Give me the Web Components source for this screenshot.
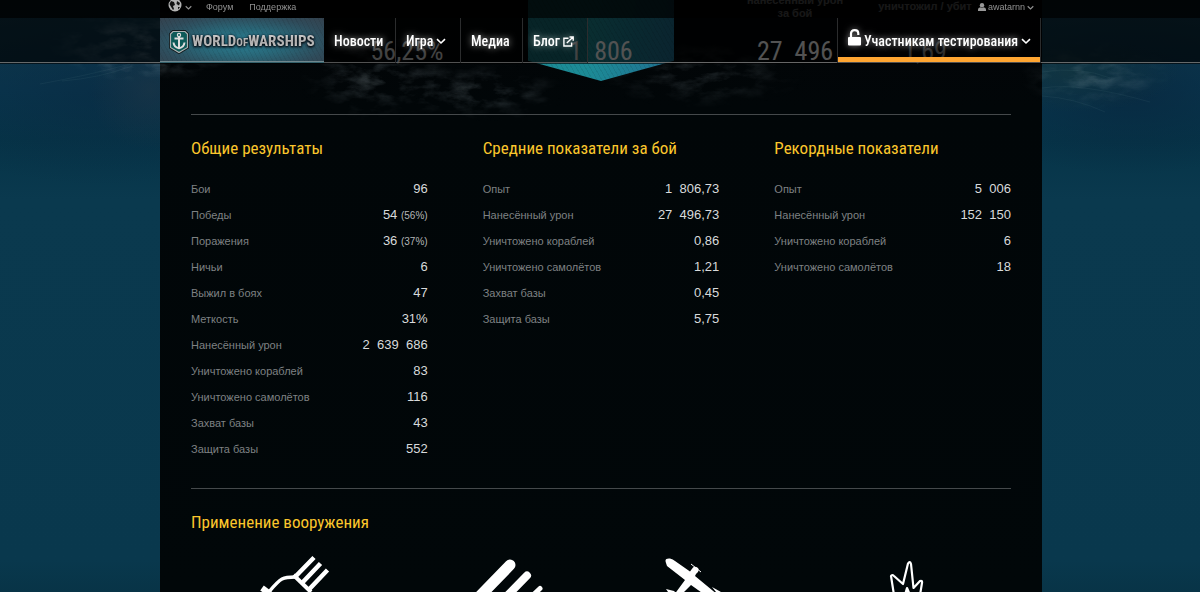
<!DOCTYPE html>
<html lang="ru">
<head>
<meta charset="utf-8">
<title>World of Warships</title>
<style>
  body { margin: 0; background: #08364b; color: #fff; font-family: "Liberation Sans", Arial, sans-serif; }
</style>
</head>
<body>
<profile-page></profile-page>

<script>
const condensed = '"Roboto Condensed", "Liberation Sans Narrow", "Liberation Sans", sans-serif';

function define(name, markup, setup) {
  customElements.define(name, class extends HTMLElement {
    connectedCallback() {
      if (this.shadowRoot) return;
      this.attachShadow({ mode: 'open' }).innerHTML = markup;
      if (setup) setup(this, this.shadowRoot);
    }
  });
}

define('chevron-icon', `
  <style>:host { display: inline-flex; } svg { width: var(--size, 9px); height: var(--size, 9px); }</style>
  <svg viewBox="0 0 10 10" fill="none" stroke="currentColor"><path d="M1 3.2 L5 7 L9 3.2" stroke-width="1.6"/></svg>`);

define('top-bar', `
  <style>
    :host { display: block; height: 18px; background: rgba(0,0,0,.91); }
    .inner { width: 882px; max-width: 100%; margin: 0 auto; padding-left: 2px; }
    nav { display: flex; align-items: center; height: 14px; padding: 0 8px; font-size: 9px; line-height: 14px; }
    a, button { display: flex; align-items: center; color: #929292; text-decoration: none; font: inherit; background: none; border: 0; padding: 0; }
    button { gap: 3px; margin-right: 14px; }
    a + a { margin-left: 16px; }
    .user { margin-left: auto; gap: 2px; }
    chevron-icon { --size: 7px; }
  </style>
  <div class="inner"><nav>
    <button aria-label="Регион">
      <svg width="14" height="14" viewBox="0 0 14 14"><circle cx="7" cy="5" r="6.5" fill="#b4b4b4"/><path d="M3 1 L6 2 L7 5 L5 6 L6 9 L5 10 L2.5 6 L1.5 4Z M9 1 L12 3 L11 5.500 L8.500 4Z M10 7 L12 7 L10 9.500Z" fill="#111"/></svg>
      <chevron-icon></chevron-icon>
    </button>
    <a href="#forum">Форум</a><a href="#support">Поддержка</a>
    <a class="user" href="#account">
      <svg width="8" height="8" viewBox="0 0 8 8" fill="#999"><circle cx="4" cy="2.300" r="2.200"/><path d="M0 8V6.500Q0 4.600 2.400 4.300Q4 5.400 5.600 4.300Q8 4.600 8 6.500V8Z"/></svg>
      awatarnn <chevron-icon></chevron-icon></a>
  </nav></div>`);

define('brand-logo', `
  <style>
    :host { display: block; flex: none; }
    a { display: flex; align-items: center; height: 45px; width: 164px; box-sizing: border-box; padding: 2px 0 0 9px; gap: 3px; text-decoration: none;
      background: repeating-linear-gradient(62deg, rgba(0,0,0,.07) 0 1px, transparent 1px 4px), radial-gradient(ellipse at 50% 55%, #2a8094 0%, #296778 38%, #2f4b5a 75%, #34424e 100%);
      box-shadow: inset 0 -1px #34616c, inset 0 -2px #6f878d; }
    svg { flex: none; }
    .name { font: 800 15px/24px ${condensed}; background: linear-gradient(#cfcfcf 15%, #adadad 50%, #dcdcdc 85%); -webkit-background-clip: text; background-clip: text; color: transparent; filter: drop-shadow(0 1px 1px #000) drop-shadow(0 0 1px #123); white-space: nowrap; }
    small { font-size: 11px; }
  </style>
  <a href="#home" aria-label="World of Warships">
    <svg width="20" height="24" viewBox="0 0 20 24">
      <path d="M4 1.500H16L18.500 4V17.500L10 22.500L1.500 17.500V4Z" fill="#0c4a4c" stroke="#101a1d" stroke-width="3"/>
      <path d="M4 1.500H16L18.500 4V17.500L10 22.500L1.500 17.500V4Z" fill="#0d5a58" stroke="#a9b0b1" stroke-width="1.200"/>
      <g fill="none" stroke="#dedede"><circle cx="10" cy="5" r="1.600" stroke-width="1.200"/><path d="M5.500 8.500H14.500M10 6.500V18" stroke-width="2"/><path d="M4.500 12.500Q5 17.300 10 18.300Q15 17.300 15.500 12.500" stroke-width="2"/></g>
    </svg>
    <span class="name">WORLD<small>OF</small>WARSHIPS</span>
  </a>`);

define('nav-tab', `
  <style>
    :host { display: block; box-sizing: border-box; border-right: 1px solid #2b2c2d; background: rgba(0,0,0,.2); }
    a { display: flex; align-items: center; gap: 3px; box-sizing: border-box; height: 44px; padding: 2px 10px 0; color: #fff; text-decoration: none; white-space: nowrap;
      font: 500 14px/20px ${condensed}; text-shadow: 0 0 7px rgba(255,255,255,.65); }
    :host([active]) { border-left: 1px solid #2b2c2d; }
    :host([active]) a { border-bottom: 5px solid #ffa632; padding-top: 6px; background: rgba(0,0,0,.35); }
    ::slotted(svg) { flex: none; filter: drop-shadow(0 0 3px rgba(255,255,255,.5)); }
  </style>
  <a><slot></slot></a>`, (host, root) => { root.querySelector('a').href = host.getAttribute('href'); });

define('site-header', `
  <style>
    :host { display: block; position: fixed; inset: 0 0 auto; z-index: 2; }
    .bar { height: 44px; background: rgba(0,0,0,.68); border-bottom: 1px solid rgba(128,128,128,.8); box-shadow: 0 1px rgba(0,0,0,.6); }
    .inner { display: flex; width: 882px; max-width: 100%; margin: 0 auto; padding-left: 2px; }
    .news { width: 72px; } .game { width: 65px; } .media { width: 62px; } .blog { width: 65px; }
    .test { margin: 0 1px 0 auto; width: 204px; }
    chevron-icon { --size: 10px; }
    .test svg { margin-bottom: 6px; }
  </style>
  <top-bar></top-bar>
  <div class="bar"><div class="inner">
    <brand-logo></brand-logo>
    <nav-tab class="news" href="#news">Новости</nav-tab>
    <nav-tab class="game" href="#game">Игра <chevron-icon></chevron-icon></nav-tab>
    <nav-tab class="media" href="#media">Медиа</nav-tab>
    <nav-tab class="blog" href="#blog">Блог
      <svg width="11" height="11" viewBox="0 0 11 11" fill="none" stroke="#fff" stroke-width="1.400"><path d="M5.500 2.200H.9V10H8.600V6.500M3.800 7L9.600 1.400M6.500 1H10.200V4.800"/></svg></nav-tab>
    <nav-tab class="test" active href="#testers">
      <svg width="13" height="17" viewBox="0 0 13 17"><rect y="8" width="13" height="8.500" rx="1" fill="#fff"/><path d="M3 9V4.500Q3 1.200 6.700 1.200Q10.300 1.200 10.300 4.500V6" fill="none" stroke="#fff" stroke-width="2.200"/></svg>
      Участникам тестирования <chevron-icon></chevron-icon></nav-tab>
  </div></div>`);

define('summary-item', `
  <style>
    :host { display: flex; flex-direction: column; justify-content: flex-end; height: 66px; text-align: center; position: relative; }
    .label { height: 26px; margin-bottom: 16px; font: 700 11px/13px "Liberation Sans", sans-serif; color: #fff; }
    .value { font: 400 26px/30px ${condensed}; color: #fff; white-space: nowrap; position: relative; }
    :host([marked])::before { content: ""; position: absolute; inset: 0 0 -15px; clip-path: polygon(0 0, 100% 0, 100% 75%, 50% 100%, 0 75%);
      background: repeating-linear-gradient(60deg, rgba(0,0,0,.08) 0 1px, transparent 1px 4px), linear-gradient(100deg, #1c8b96 45%, #206f92); }
  </style>
  <div class="label"><slot name="label"></slot></div>
  <div class="value"><slot></slot></div>`);

define('battle-summary', `
  <style>
    :host { display: flex; justify-content: flex-end; height: 64px; padding-right: 52px; }
    summary-item { width: 130px; }
    summary-item[marked] { width: 146px; margin: 0 56px; }
  </style>
  <summary-item>56,25%</summary-item>
  <summary-item marked>1&nbsp;&nbsp;806</summary-item>
  <summary-item><span slot="label">нанесённый урон<br>за бой</span>27&nbsp;&nbsp;496</summary-item>
  <summary-item><span slot="label">уничтожил / убит</span>1,69</summary-item>`);

define('section-title', `
  <style>
    :host { display: block; }
    h2 { margin: 0; font: 400 17px/24px ${condensed}; color: #fbc62c; }
  </style><h2><slot></slot></h2>`);

define('stat-table', `
  <style>
    :host { display: block; }
    table { width: 100%; margin-top: 16px; border-collapse: collapse; }
    th, td { height: 26px; padding: 0; line-height: 16px; }
    th { text-align: left; font-size: 11px; font-weight: 400; color: #7e8183; }
    td { text-align: right; font-size: 13px; color: #d8dadb; white-space: nowrap; }
    small { font-size: 10px; color: #b4b6b7; }
  </style>
  <section-title><slot></slot></section-title>
  <table><tbody></tbody></table>`, (host, root) => {
  root.querySelector('tbody').innerHTML = host.getAttribute('rows').split(';').map(row => {
    const [label, value, share] = row.split('|');
    return `<tr><th scope="row">${label}</th><td>${value.replace(/ /g, '&nbsp;&nbsp;')}${share ? ` <small>(${share})</small>` : ''}</td></tr>`;
  }).join('');
});

define('weapon-list', `
  <style>
    :host { display: grid; grid-template-columns: repeat(4, 1fr); margin-top: 21px; justify-items: center; }
    svg { display: block; width: 100px; height: 37px; }
  </style>
  <svg viewBox="0 0 100 37" fill="none" stroke="#fff" stroke-width="4.500"><path d="M70 2.500L51 22M76.500 8.500L58 28M83.500 15L65 34.500"/><path d="M49.500 20L67 37" stroke-width="4"/><path d="M51 22Q42 22 38 24Q34 26 24 38" stroke-width="3.500"/><path d="M18 33L26 39" stroke-width="6"/></svg>
  <svg viewBox="0 0 100 37" fill="none" stroke="#fff" stroke-linecap="round"><path d="M61 10L30 42" stroke-width="11"/><path d="M78 20.500L56 43" stroke-width="8"/><path d="M91 33.500L80 44" stroke-width="5"/></svg>
  <svg viewBox="0 0 100 37" fill="#fff"><path d="M12 8Q10 3 16 3.500Q19 4 21 6L36 16.500L39 12.500Q41 11 44 13Q46 16 42 19L41 21L64 40H51L37 30L27 40H20L31 25L13 11Z"/><path d="M37 9L47 17" stroke="#fff"/><path d="M12 34L20 36L24 40H16ZM58 32L67 37H62Z"/></svg>
  <svg viewBox="0 0 100 37" fill="none" stroke="#fff" stroke-width="2.200" stroke-linejoin="round"><path d="M35 40L32 21Q33 19 35 21L44 29L49 8.500Q51 5.500 52 9L54.500 33L61 26Q63.500 25 63 28L61 40M46 40L48 33L51 40"/></svg>`);

define('sea-foam', `
  <style>:host { display: block; position: absolute; inset: 0 0 auto; height: 140px; pointer-events: none; } svg { display: block; width: 100%; height: 100%; }</style>
  <svg viewBox="0 0 1200 140" preserveAspectRatio="xMidYMin slice" aria-hidden="true">
    <defs>
      <filter id="spray" x="0" y="0" width="100%" height="100%"><feTurbulence type="fractalNoise" baseFrequency=".04 .09" numOctaves="5" seed="8"/><feColorMatrix values="0 0 0 0 .5  0 0 0 0 .6  0 0 0 0 .66  0 2.500 0 0 -1.050"/></filter>
      <radialGradient id="fade"><stop offset="0" stop-color="#fff"/><stop offset="1" stop-color="#fff" stop-opacity="0"/></radialGradient>
      <mask id="zones" maskUnits="userSpaceOnUse" x="0" y="0" width="1200" height="140">
        <ellipse cx="145" cy="45" rx="100" ry="38" fill="url(#fade)" opacity=".9"/>
        <ellipse cx="375" cy="75" rx="80" ry="48" fill="url(#fade)" opacity=".5"/>
        <ellipse cx="480" cy="92" rx="90" ry="30" fill="url(#fade)" opacity=".5"/>
        <ellipse cx="700" cy="75" rx="110" ry="34" fill="url(#fade)" opacity=".4"/>
        <ellipse cx="1095" cy="75" rx="80" ry="36" fill="url(#fade)" opacity=".4"/>
      </mask>
    </defs>
    <g mask="url(#zones)"><rect width="1200" height="140" filter="url(#spray)" opacity=".5"/></g>
    <g fill="none" stroke="#7fa0a8" stroke-opacity=".08"><path d="M40 84Q90 75 130 64M62 81Q100 78 132 66M1042 72Q1080 66 1110 78M1042 88Q1080 82 1150 102M1042 96Q1075 98 1105 112"/></g>
  </svg>`);

define('profile-page', `
  <style>
    :host { display: block; position: relative; min-height: 100vh; padding-left: 2px;
      background:
        radial-gradient(ellipse 60px 60px at 150px 90px, rgba(36,54,68,.45), transparent),
        radial-gradient(ellipse 110px 40px at 1070px 72px, rgba(20,54,62,.7), transparent),
        radial-gradient(ellipse 200px 90px at 100px 95px, rgba(9,38,62,.5), transparent),
        radial-gradient(ellipse 170px 80px at 1130px 95px, rgba(8,38,62,.7), transparent),
        linear-gradient(#12384a 0, #09364e 90px, #063448 140px, #0a394e 200px, #09384d 560px, #083447 592px); }
    main { width: 882px; max-width: 100%; margin: 0 auto; min-height: 100vh; box-sizing: border-box;
      background: linear-gradient(#030507, #010608 110px, #010709 100%); }
    battle-summary, .content { position: relative; }
    .content { padding: 50px 31px 0; }
    section { border-top: 1px solid #45494b; padding-top: 21px; }
    .stats { display: grid; grid-template-columns: repeat(3, 1fr); gap: 55px; align-items: start; padding-bottom: 26px; }
  </style>
  <site-header></site-header>
  <sea-foam></sea-foam>
  <main>
    <battle-summary></battle-summary>
    <div class="content">
      <section class="stats">
        <stat-table rows="Бои|96;Победы|54|56%;Поражения|36|37%;Ничьи|6;Выжил в боях|47;Меткость|31%;Нанесённый урон|2 639 686;Уничтожено кораблей|83;Уничтожено самолётов|116;Захват базы|43;Защита базы|552">Общие результаты</stat-table>
        <stat-table rows="Опыт|1 806,73;Нанесённый урон|27 496,73;Уничтожено кораблей|0,86;Уничтожено самолётов|1,21;Захват базы|0,45;Защита базы|5,75">Средние показатели за бой</stat-table>
        <stat-table rows="Опыт|5 006;Нанесённый урон|152 150;Уничтожено кораблей|6;Уничтожено самолётов|18">Рекордные показатели</stat-table>
      </section>
      <section>
        <section-title>Применение вооружения</section-title>
        <weapon-list></weapon-list>
      </section>
    </div>
  </main>`);
</script>
</body>
</html>
